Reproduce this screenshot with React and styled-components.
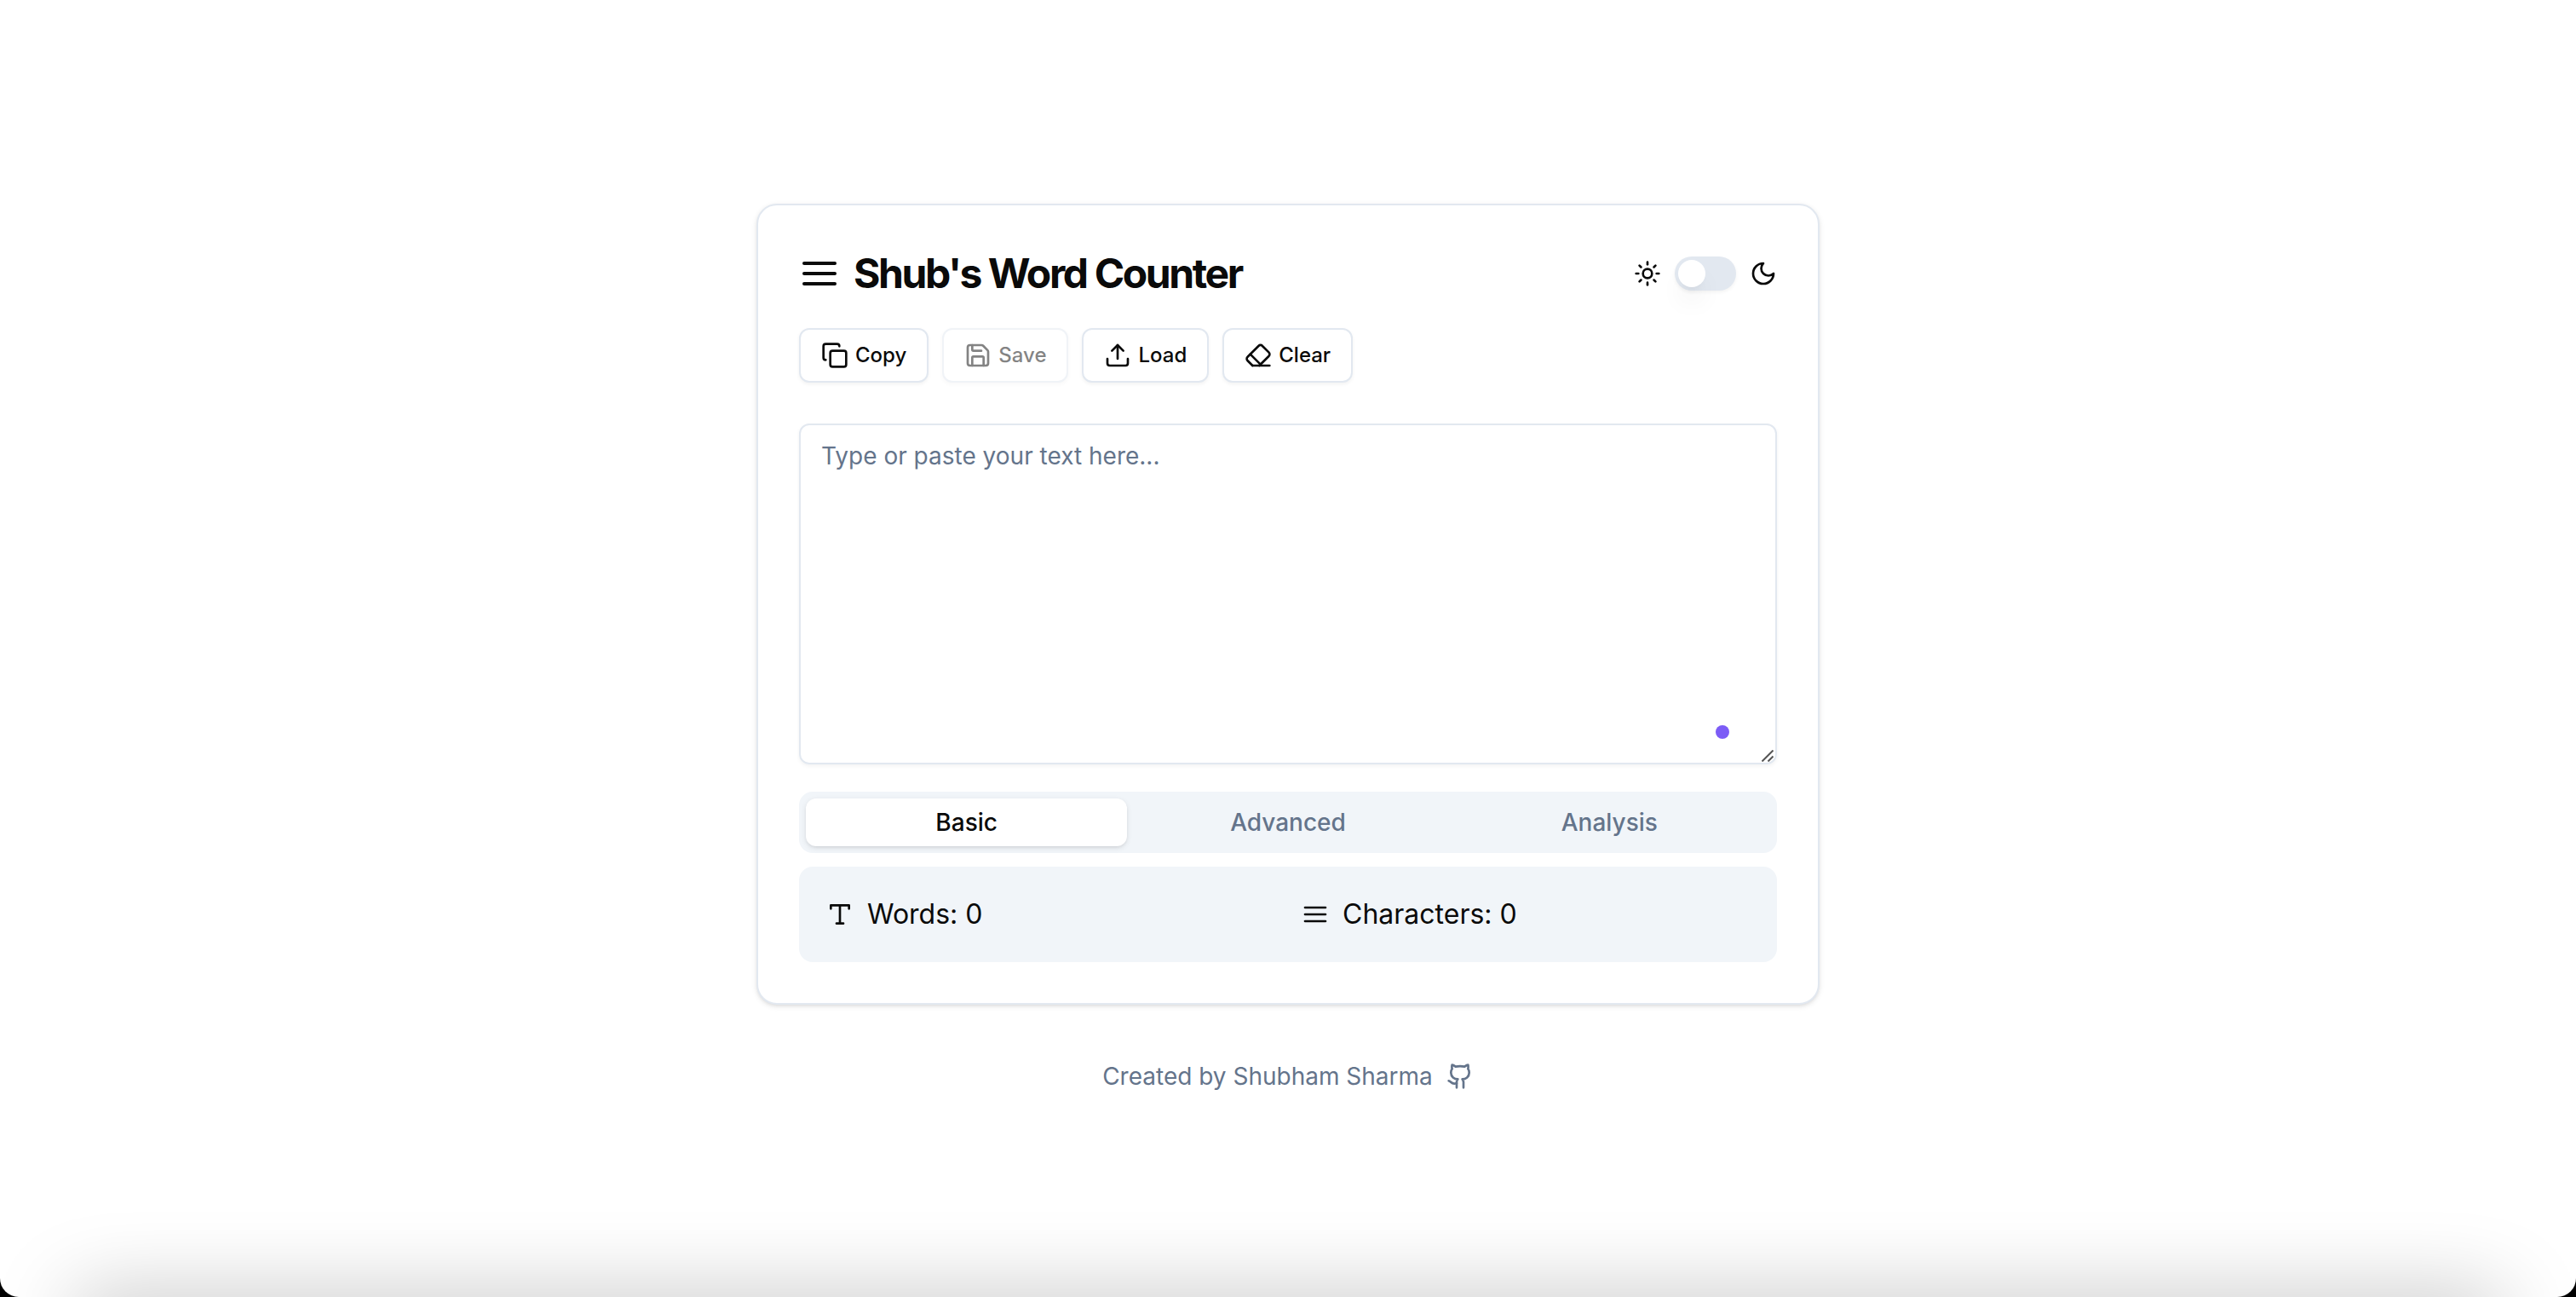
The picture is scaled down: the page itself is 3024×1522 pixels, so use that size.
import React, { useState } from "react";
import styled, { createGlobalStyle } from "styled-components";

const GlobalStyle = createGlobalStyle`
  *, *::before, *::after { box-sizing: border-box; }
  body {
    margin: 0;
    background: #000;
    color: #0a0a0a;
    font-family: Inter, "Liberation Sans", sans-serif;
  }
  button, textarea, input { font: inherit; color: inherit; }
`;

const Page = styled.div`
  position: relative;
  display: flex;
  flex-direction: column;
  align-items: center;
  justify-content: center;
  gap: 64px;
  min-height: 100vh;
  padding: 48px;
  background: #fff;
  border-radius: 0 0 22px 22px;
  overflow: hidden;

  &::after {
    content: "";
    position: absolute;
    left: 88px;
    right: 88px;
    bottom: -60px;
    height: 60px;
    pointer-events: none;
    box-shadow: 0 0 96px rgba(0, 0, 0, 0.27);
  }
`;

const Card = styled.main`
  width: 100%;
  max-width: 1248px;
  padding: 48px;
  background: #fff;
  border: 2px solid #e2e8f0;
  border-radius: 24px;
  box-shadow: 0 2px 6px rgba(0, 0, 0, 0.1), 0 2px 4px -2px rgba(0, 0, 0, 0.1);
`;

const Header = styled.header`
  display: flex;
  align-items: center;
  justify-content: space-between;
`;

const Row = styled.div`
  display: flex;
  align-items: center;
  gap: 16px;
`;

const Title = styled.h1`
  margin: 0;
  font-size: 48px;
  line-height: 64px;
  font-weight: 700;
  letter-spacing: -0.05em;
`;

const Switch = styled.input`
  appearance: none;
  width: 72px;
  height: 40px;
  margin: 0;
  padding: 4px;
  border-radius: 20px;
  background: ${({ checked }) => (checked ? "#0a0a0a" : "#e2e8f0")};
  box-shadow: 0 2px 4px rgba(0, 0, 0, 0.05);
  cursor: pointer;

  &::before {
    content: "";
    display: block;
    width: 32px;
    height: 32px;
    margin-left: ${({ checked }) => (checked ? "32px" : "0")};
    border-radius: 50%;
    background: #fff;
    box-shadow: 0 20px 30px -6px rgba(0, 0, 0, 0.1),
      0 8px 12px -8px rgba(0, 0, 0, 0.1);
  }
`;

const Toolbar = styled.div`
  display: flex;
  gap: 16px;
  margin-top: 32px;
`;

const ToolButton = styled.button`
  display: inline-flex;
  align-items: center;
  gap: 8px;
  height: 64px;
  padding: 0 24px;
  border: 2px solid #e2e8f0;
  border-radius: 12px;
  background: #fff;
  box-shadow: 0 2px 4px rgba(0, 0, 0, 0.05);
  font-size: 24px;
  line-height: 32px;
  font-weight: 500;
  cursor: pointer;

  &:disabled {
    color: #0a0a0a;
    opacity: 0.5;
    cursor: default;
  }
`;

const Editor = styled.div`
  position: relative;
  display: flex;
  margin-top: 48px;
`;

const TextArea = styled.textarea`
  width: 100%;
  height: 400px;
  padding: 16px 24px;
  border: 2px solid #e2e8f0;
  border-radius: 12px;
  background: transparent;
  box-shadow: 0 2px 4px rgba(0, 0, 0, 0.05);
  font-size: 28px;
  line-height: 40px;
  resize: none;
  outline: none;

  &::placeholder {
    color: #64748b;
    opacity: 1;
  }
`;

const Dot = styled.span`
  position: absolute;
  right: 56px;
  bottom: 30px;
  width: 16px;
  height: 16px;
  border-radius: 50%;
  background: #7c5cf6;
`;

const Grip = styled.svg`
  position: absolute;
  right: 4px;
  bottom: 3px;
  width: 14px;
  height: 14px;
  pointer-events: none;
`;

const Tabs = styled.div`
  display: grid;
  grid-template-columns: repeat(3, 1fr);
  margin-top: 32px;
  padding: 8px;
  border-radius: 16px;
  background: #f1f5f9;
`;

const Tab = styled.button`
  height: 56px;
  padding: 0 24px;
  border: 0;
  border-radius: 12px;
  background: ${({ $active }) => ($active ? "#fff" : "transparent")};
  color: ${({ $active }) => ($active ? "#0a0a0a" : "#64748b")};
  box-shadow: ${({ $active }) =>
    $active
      ? "0 2px 6px rgba(0, 0, 0, 0.1), 0 2px 4px -2px rgba(0, 0, 0, 0.1)"
      : "none"};
  font-size: 28px;
  line-height: 40px;
  font-weight: 500;
  cursor: pointer;
`;

const Panel = styled.section`
  display: grid;
  grid-template-columns: repeat(2, 1fr);
  gap: 32px;
  margin-top: 16px;
  padding: 32px;
  border-radius: 16px;
  background: #f1f5f9;
`;

const Stat = styled.div`
  display: flex;
  align-items: center;
  gap: 16px;
  font-size: 32px;
  line-height: 48px;
`;

const Footer = styled.footer`
  display: flex;
  align-items: center;
  gap: 16px;
  color: #64748b;
  font-size: 28px;
  line-height: 40px;
`;

const FooterLink = styled.a`
  display: flex;
  color: inherit;
`;

const IconSvg = styled.svg`
  flex: none;
  width: ${({ $size }) => $size}px;
  height: ${({ $size }) => $size}px;
  fill: none;
  stroke: currentColor;
  stroke-width: 2;
  stroke-linecap: round;
  stroke-linejoin: round;
`;

const icons = {
  lines: ["M3 6h18", "M3 12h18", "M3 18h18"],
  sun: [
    "M16 12a4 4 0 1 1-8 0 4 4 0 0 1 8 0Z",
    "M12 2v2",
    "M12 20v2",
    "m4.93 4.93 1.41 1.41",
    "m17.66 17.66 1.41 1.41",
    "M2 12h2",
    "M20 12h2",
    "m6.34 17.66-1.41 1.41",
    "m19.07 4.93-1.41 1.41",
  ],
  moon: ["M12 3a6 6 0 0 0 9 9 9 9 0 1 1-9-9Z"],
  copy: [
    "M10 8h10a2 2 0 0 1 2 2v10a2 2 0 0 1-2 2H10a2 2 0 0 1-2-2V10a2 2 0 0 1 2-2Z",
    "M4 16c-1.1 0-2-.9-2-2V4c0-1.1.9-2 2-2h10c1.1 0 2 .9 2 2",
  ],
  save: [
    "M15.2 3a2 2 0 0 1 1.4.6l3.8 3.8a2 2 0 0 1 .6 1.4V19a2 2 0 0 1-2 2H5a2 2 0 0 1-2-2V5a2 2 0 0 1 2-2z",
    "M17 21v-7a1 1 0 0 0-1-1H8a1 1 0 0 0-1 1v7",
    "M7 3v4a1 1 0 0 0 1 1h7",
  ],
  upload: [
    "M21 15v4a2 2 0 0 1-2 2H5a2 2 0 0 1-2-2v-4",
    "m17 8-5-5-5 5",
    "M12 3v12",
  ],
  eraser: [
    "m7 21-4.3-4.3c-1-1-1-2.5 0-3.4l9.6-9.6c1-1 2.5-1 3.4 0l5.6 5.6c1 1 1 2.5 0 3.4L13 21",
    "M22 21H7",
    "m5 11 9 9",
  ],
  type: ["M4 7V4h16v3", "M9 20h6", "M12 4v16"],
  github: [
    "M15 22v-4a4.8 4.8 0 0 0-1-3.5c3 0 6-2 6-5.5.08-1.25-.27-2.48-1-3.5.28-1.15.28-2.35 0-3.5 0 0-1 0-3 1.5-2.64-.5-5.36-.5-8 0C6 2 5 2 5 2c-.3 1.15-.3 2.35 0 3.5A5.403 5.403 0 0 0 4 9c0 3.5 3 5.5 6 5.5-.39.49-.68 1.05-.85 1.65-.17.6-.22 1.23-.15 1.85v4",
    "M9 18c-4.51 2-5-2-7-2",
  ],
};

function Icon({ name, size = 32 }) {
  return (
    <IconSvg viewBox="0 0 24 24" $size={size} aria-hidden="true">
      {icons[name].map((d) => (
        <path key={d} d={d} />
      ))}
    </IconSvg>
  );
}

const tabNames = ["Basic", "Advanced", "Analysis"];

export default function App() {
  const [text, setText] = useState("");
  const [dark, setDark] = useState(false);
  const [tab, setTab] = useState("Basic");
  const words = text.split(/\s+/).filter(Boolean).length;

  return (
    <>
      <GlobalStyle />
      <Page>
        <Card>
          <Header>
            <Row>
              <Icon name="lines" size={48} />
              <Title>Shub's Word Counter</Title>
            </Row>
            <Row>
              <Icon name="sun" />
              <Switch
                type="checkbox"
                role="switch"
                aria-label="Dark mode"
                checked={dark}
                onChange={(e) => setDark(e.target.checked)}
              />
              <Icon name="moon" />
            </Row>
          </Header>

          <Toolbar>
            <ToolButton type="button">
              <Icon name="copy" />
              Copy
            </ToolButton>
            <ToolButton type="button" disabled={!text}>
              <Icon name="save" />
              Save
            </ToolButton>
            <ToolButton type="button">
              <Icon name="upload" />
              Load
            </ToolButton>
            <ToolButton type="button" onClick={() => setText("")}>
              <Icon name="eraser" />
              Clear
            </ToolButton>
          </Toolbar>

          <Editor>
            <TextArea
              aria-label="Text"
              placeholder="Type or paste your text here..."
              value={text}
              onChange={(e) => setText(e.target.value)}
            />
            <Dot />
            <Grip viewBox="0 0 14 14" fill="none" stroke="#555" strokeWidth="2">
              <path d="M0.5 13.5 13.5 0.5M7.5 13.5 13.5 7.5" />
            </Grip>
          </Editor>

          <Tabs role="tablist">
            {tabNames.map((name) => (
              <Tab
                key={name}
                type="button"
                role="tab"
                aria-selected={tab === name}
                $active={tab === name}
                onClick={() => setTab(name)}
              >
                {name}
              </Tab>
            ))}
          </Tabs>

          <Panel>
            <Stat>
              <Icon name="type" />
              <span>Words: {words}</span>
            </Stat>
            <Stat>
              <Icon name="lines" />
              <span>Characters: {text.length}</span>
            </Stat>
          </Panel>
        </Card>

        <Footer>
          <span>Created by Shubham Sharma</span>
          <FooterLink href="#github" aria-label="GitHub">
            <Icon name="github" />
          </FooterLink>
        </Footer>
      </Page>
    </>
  );
}
